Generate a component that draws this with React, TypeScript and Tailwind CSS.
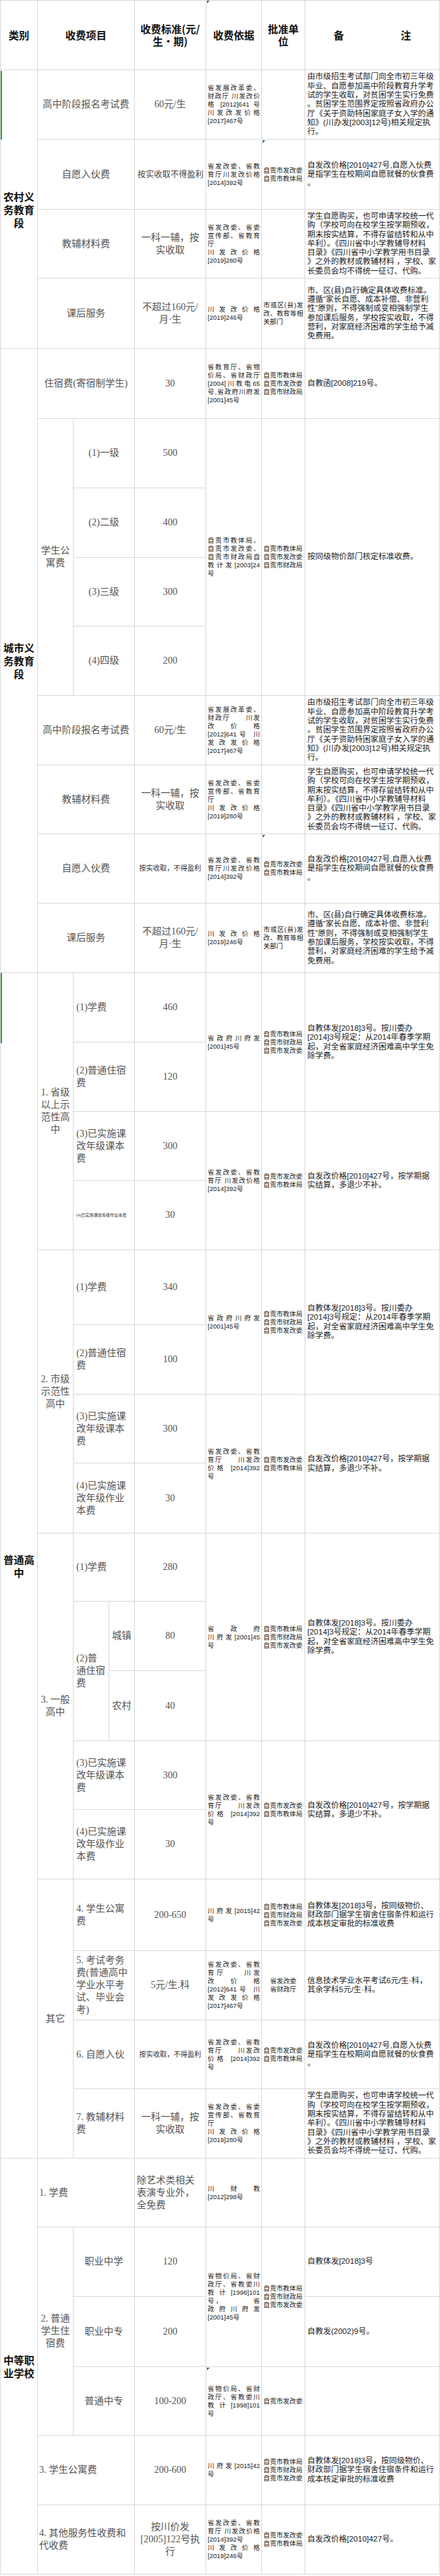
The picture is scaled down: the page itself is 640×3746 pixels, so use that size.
import React from 'react';

const LINE = 'border-r border-b border-[#d9d9d9]';
const SERIF = "font-['Liberation_Serif','Noto_Sans_CJK_SC',serif]";
const SANS = "font-['Liberation_Sans','Noto_Sans_CJK_SC',sans-serif]";
const HEI = "font-['Noto_Sans_CJK_SC',sans-serif]";

// "=" at the start of a line means the line is spread to the full cell width
const Lines: React.FC<{ lines: string[] }> = ({ lines }) => (
  <div className="w-full">
    {lines.map((l, i) =>
      l.startsWith('=') ? (
        <div key={i} className="text-justify [text-align-last:justify]">
          {l.slice(1)}
        </div>
      ) : (
        <div key={i} className="whitespace-nowrap">
          {l}
        </div>
      )
    )}
  </div>
);

type CellProps = { c: string; lines?: string[]; className?: string };

const Head: React.FC<{ c: string; children: React.ReactNode; className?: string }> = ({
  c,
  children,
  className = 'justify-center text-center',
}) => (
  <div
    className={`${c} ${LINE} flex items-center border-t text-[15px] leading-[18px] font-bold text-[#111] ${HEI} ${className}`}
  >
    {children}
  </div>
);

const Cat: React.FC<CellProps> = ({ c, lines = [] }) => (
  <div
    className={`${c} ${LINE} flex items-center justify-center border-l text-center text-[15px] leading-[19px] font-bold text-[#111] ${HEI}`}
  >
    <Lines lines={lines} />
  </div>
);

const Grp: React.FC<CellProps> = ({ c, lines = [] }) => (
  <div className={`${c} ${LINE} flex items-center justify-center text-center text-[14px] leading-[18px] text-[#555] ${SERIF}`}>
    <Lines lines={lines} />
  </div>
);

const Item: React.FC<CellProps & { left?: boolean; size?: string }> = ({
  c,
  lines = [],
  left = false,
  size = 'text-[14px] leading-[18px] text-[#555]',
  className = 'pl-[4px]',
}) => (
  <div
    className={`${c} ${LINE} flex items-center ${SERIF} ${size} ${
      left ? `justify-start text-left ${className}` : 'justify-center text-center'
    }`}
  >
    <Lines lines={lines} />
  </div>
);

const Std: React.FC<CellProps & { size?: string; left?: boolean }> = ({
  c,
  lines = [],
  size = 'text-[14px] leading-[18px] text-[#555]',
  left = false,
}) => (
  <div
    className={`${c} ${LINE} flex items-center ${SERIF} ${size} ${
      left ? 'justify-start pl-[3px] text-left' : 'justify-center px-[4px] text-center'
    }`}
  >
    <Lines lines={lines} />
  </div>
);

const Yj: React.FC<CellProps> = ({ c, lines = [] }) => (
  <div className={`${c} ${LINE} flex items-center px-[2px] text-[9.5px] leading-[12px] text-[#222] ${SANS}`}>
    <Lines lines={lines} />
  </div>
);

const Pz: React.FC<CellProps & { center?: boolean }> = ({ c, lines = [], center = false }) => (
  <div
    className={`${c} ${LINE} flex items-center px-[2px] text-[9.5px] leading-[12px] text-[#222] ${SANS} ${
      center ? 'text-center' : 'text-left'
    }`}
  >
    <Lines lines={lines} />
  </div>
);

const Note: React.FC<CellProps> = ({ c, lines = [] }) => (
  <div className={`${c} ${LINE} flex items-center pl-[3px] pr-[2px] text-[11.5px] leading-[13.3px] text-[#222] ${SANS}`}>
    <Lines lines={lines} />
  </div>
);

const yjKaoshiA = ['=省发展改革委、', '=财政厅 川发改价', '=格 [2012]641 号', '=川发改发价格', '[2017]467号'];
const yjKaoshiB = ['=省发展改革委、', '=财政厅　　川发', '=改价格', '=[2012]641号 川', '=发改发价格', '[2017]467号'];
const yjKaoshiC = ['=省发改委、省教', '=育厅　　川发', '=改价格', '=[2012]641号 川', '=发改发价格', '[2017]467号'];
const yjHuoA = ['=省发改委、省教', '=育厅川发改价格', '[2014]392号'];
const yjHuoB = ['=省发改委、省教', '=育厅　　川发改', '=价格 [2014]392', '号'];
const yjHuoC = ['=省发改委、省教', '=育厅 川发改价格', '[2014]392号'];
const yjJiaofu = ['=省发改委、省委', '=宣传部、省教育', '厅', '=川发改价格', '[2019]280号'];
const yjKehou = ['=川发改价格', '[2019]246号'];
const yjZhusu = ['=省教育厅、省物', '=价局、省财政厅', '=[2004]川教电65', '=号,省政府川府发', '[2001]45号'];
const yjGongyu = ['=自贡市教体局、', '=自贡市发改委、', '=自贡市财政局自', '=教计发[2003]24', '号'];
const yjXuefei = ['=省政府川府发', '[2001]45号'];
const yjXuefeiB = ['=省政府', '=川府发[2001]45', '号'];
const yjGy = ['=川府发[2015]42', '号'];
const yjZhongzhi = ['=川财教', '[2012]298号'];
const yjWujia2 = ['=省物价局、省财', '=政厅、省教委川', '=教计[1998]101', '=号，　　　　省', '=政府川府发', '[2001]45号'];
const yjWujia1 = ['=省物价局、省财', '=政厅、省教委川', '=教计[1998]101', '号'];
const yjQita = ['=省发改委、省教', '=育厅 川发改价格', '[2014]392号', '=川发改价格', '[2019]246号'];

const pzSanA = ['自贡市教体局', '自贡市发改委', '自贡市财政局'];
const pzSanB = ['自贡市教体局', '自贡市财政局', '自贡市发改委'];
const pzEr = ['自贡市发改委', '自贡市教体局'];
const pzKehou = ['=市或区(县)发', '=改、教育等相', '关部门'];

const nKaoshi = [
  '由市级招生考试部门向全市初三年级',
  '毕业、自愿参加高中阶段教育升学考',
  '试的学生收取，对贫困学生实行免费',
  '。贫困学生范围界定按照省政府办公',
  '厅《关于资助特困家庭子女入学的通',
  '知》(川办发[2003]12号)相关规定执',
  '行。',
];
const nHuoshi = ['自发改价格[2010]427号,自愿入伙费', '是指学生在校期间自愿就餐的伙食费', '。'];
const nJiaofu = [
  '学生自愿购买，也可申请学校统一代',
  '购（学校可向在校学生按学期预收，',
  '期末按实结算，不得存留结转和从中',
  '牟利）。《四川省中小学教辅导材料',
  '目录》《四川省中小学教学用书目录',
  '》之外的教材或教辅材料 ，学校、家',
  '长委员会均不得统一征订、代购。',
];
const nKehou = [
  '市、区(县)自行确定具体收费标准。',
  '遵循“家长自愿、成本补偿、非营利',
  '性”原则，不得强制或变相强制学生',
  '参加课后服务，学校按实收取，不得',
  '营利，对家庭经济困难的学生给予减',
  '免费用。',
];
const nXuefei = ['自教体发[2018]3号。按川委办', '[2014]3号规定：从2014年春季学期', '起，对全省家庭经济困难高中学生免', '除学费。'];
const nKeben = ['自发改价格[2010]427号，按学期据', '实结算，多退少不补。'];
const nGongyu = ['自教体发[2018]3号，按同级物价、', '财政部门据学生宿舍住宿条件和运行', '成本核定审批的标准收费'];

const small = 'text-[10px] leading-[12px] text-[#333]';

export default function App() {
  return (
    <div className="relative w-[640px] bg-white">
      <div className="grid grid-cols-[55px_52px_52px_37px_104px_81px_63px_196px] grid-rows-[102px_101px_102px_100px_102px_102px_101px_101px_100px_101px_101px_100px_101px_101px_101px_101px_100px_101px_109px_101px_100px_102px_99px_101px_102px_100px_101px_104px_101px_100px_101px_100px_101px_102px_100px_101px_101px]">
        {/* header */}
        <Head c="col-start-1 row-start-1 border-l">类别</Head>
        <Head c="col-start-2 col-span-3 row-start-1">收费项目</Head>
        <Head c="col-start-5 row-start-1">
          <div>
            收费标准(元/
            <br />
            生·期)
          </div>
        </Head>
        <Head c="col-start-6 row-start-1">收费依据</Head>
        <Head c="col-start-7 row-start-1">
          <div>
            批准单
            <br />
            位
          </div>
        </Head>
        <Head c="col-start-8 row-start-1" className="justify-around">
          <span>备</span>
          <span>注</span>
        </Head>

        {/* 农村义务教育段 */}
        <Cat c="col-start-1 row-start-2 row-span-4" lines={['农村义', '务教育', '段']} />
        <Item c="col-start-2 col-span-3 row-start-2" lines={['高中阶段报名考试费']} />
        <Std c="col-start-5 row-start-2" lines={['60元/生']} />
        <Yj c="col-start-6 row-start-2" lines={yjKaoshiA} />
        <Pz c="col-start-7 row-start-2" />
        <Note c="col-start-8 row-start-2" lines={nKaoshi} />

        <Item c="col-start-2 col-span-3 row-start-3" lines={['自愿入伙费']} />
        <Std c="col-start-5 row-start-3" lines={['按实收取不得盈利']} size="text-[12px] leading-[16px] text-[#444]" />
        <Yj c="col-start-6 row-start-3" lines={yjHuoA} />
        <Pz c="col-start-7 row-start-3" lines={pzEr} />
        <Note c="col-start-8 row-start-3" lines={nHuoshi} />

        <Item c="col-start-2 col-span-3 row-start-4" lines={['教辅材料费']} />
        <Std c="col-start-5 row-start-4" lines={['一科一辅，按', '实收取']} />
        <Yj c="col-start-6 row-start-4" lines={yjJiaofu} />
        <Pz c="col-start-7 row-start-4" />
        <Note c="col-start-8 row-start-4" lines={nJiaofu} />

        <Item c="col-start-2 col-span-3 row-start-5" lines={['课后服务']} />
        <Std c="col-start-5 row-start-5" lines={['不超过160元/', '月·生']} />
        <Yj c="col-start-6 row-start-5" lines={yjKehou} />
        <Pz c="col-start-7 row-start-5" lines={pzKehou} />
        <Note c="col-start-8 row-start-5" lines={nKehou} />

        {/* 城市义务教育段 */}
        <Cat c="col-start-1 row-start-6 row-span-9" lines={['城市义', '务教育', '段']} />
        <Item c="col-start-2 col-span-3 row-start-6" lines={['住宿费(寄宿制学生)']} />
        <Std c="col-start-5 row-start-6" lines={['30']} />
        <Yj c="col-start-6 row-start-6" lines={yjZhusu} />
        <Pz c="col-start-7 row-start-6" lines={pzSanA} />
        <Note c="col-start-8 row-start-6" lines={['自教函[2008]219号。']} />

        <Grp c="col-start-2 row-start-7 row-span-4" lines={['学生公', '寓费']} />
        <Item c="col-start-3 col-span-2 row-start-7" lines={['(1)一级']} />
        <Std c="col-start-5 row-start-7" lines={['500']} />
        <Item c="col-start-3 col-span-2 row-start-8" lines={['(2)二级']} />
        <Std c="col-start-5 row-start-8" lines={['400']} />
        <Item c="col-start-3 col-span-2 row-start-9" lines={['(3)三级']} />
        <Std c="col-start-5 row-start-9" lines={['300']} />
        <Item c="col-start-3 col-span-2 row-start-10" lines={['(4)四级']} />
        <Std c="col-start-5 row-start-10" lines={['200']} />
        <Yj c="col-start-6 row-start-7 row-span-4" lines={yjGongyu} />
        <Pz c="col-start-7 row-start-7 row-span-4" lines={pzSanA} />
        <Note c="col-start-8 row-start-7 row-span-4" lines={['按同级物价部门核定标准收费。']} />

        <Item c="col-start-2 col-span-3 row-start-11" lines={['高中阶段报名考试费']} />
        <Std c="col-start-5 row-start-11" lines={['60元/生']} />
        <Yj c="col-start-6 row-start-11" lines={yjKaoshiB} />
        <Pz c="col-start-7 row-start-11" />
        <Note c="col-start-8 row-start-11" lines={nKaoshi} />

        <Item c="col-start-2 col-span-3 row-start-12" lines={['教辅材料费']} />
        <Std c="col-start-5 row-start-12" lines={['一科一辅，按', '实收取']} />
        <Yj c="col-start-6 row-start-12" lines={yjJiaofu} />
        <Pz c="col-start-7 row-start-12" />
        <Note c="col-start-8 row-start-12" lines={nJiaofu} />

        <Item c="col-start-2 col-span-3 row-start-13" lines={['自愿入伙费']} />
        <Std c="col-start-5 row-start-13" lines={['按实收取，不得盈利']} size={small} />
        <Yj c="col-start-6 row-start-13" lines={yjHuoA} />
        <Pz c="col-start-7 row-start-13" lines={pzEr} />
        <Note c="col-start-8 row-start-13" lines={nHuoshi} />

        <Item c="col-start-2 col-span-3 row-start-14" lines={['课后服务']} />
        <Std c="col-start-5 row-start-14" lines={['不超过160元/', '月·生']} />
        <Yj c="col-start-6 row-start-14" lines={yjKehou} />
        <Pz c="col-start-7 row-start-14" lines={pzKehou} />
        <Note c="col-start-8 row-start-14" lines={nKehou} />

        {/* 普通高中 */}
        <Cat c="col-start-1 row-start-15 row-span-17" lines={['普通高', '中']} />

        <Grp c="col-start-2 row-start-15 row-span-4" lines={['1. 省级', '以上示', '范性高', '中']} />
        <Item left c="col-start-3 col-span-2 row-start-15" lines={['(1)学费']} />
        <Std c="col-start-5 row-start-15" lines={['460']} />
        <Item left c="col-start-3 col-span-2 row-start-16" lines={['(2)普通住宿', '费']} />
        <Std c="col-start-5 row-start-16" lines={['120']} />
        <Item left c="col-start-3 col-span-2 row-start-17" lines={['(3)已实施课', '改年级课本', '费']} />
        <Std c="col-start-5 row-start-17" lines={['300']} />
        <Item
          left
          c="col-start-3 col-span-2 row-start-18"
          lines={['(4)已实施课改年级作业本费']}
          size="text-[6px] leading-[8px] text-[#333]"
        />
        <Std c="col-start-5 row-start-18" lines={['30']} />
        <Yj c="col-start-6 row-start-15 row-span-2" lines={yjXuefei} />
        <Pz c="col-start-7 row-start-15 row-span-2" lines={pzSanB} />
        <Note c="col-start-8 row-start-15 row-span-2" lines={nXuefei} />
        <Yj c="col-start-6 row-start-17 row-span-2" lines={yjHuoC} />
        <Pz c="col-start-7 row-start-17 row-span-2" lines={pzEr} />
        <Note c="col-start-8 row-start-17 row-span-2" lines={nKeben} />

        <Grp c="col-start-2 row-start-19 row-span-4" lines={['2. 市级', '示范性', '高中']} />
        <Item left c="col-start-3 col-span-2 row-start-19" lines={['(1)学费']} />
        <Std c="col-start-5 row-start-19" lines={['340']} />
        <Item left c="col-start-3 col-span-2 row-start-20" lines={['(2)普通住宿', '费']} />
        <Std c="col-start-5 row-start-20" lines={['100']} />
        <Item left c="col-start-3 col-span-2 row-start-21" lines={['(3)已实施课', '改年级课本', '费']} />
        <Std c="col-start-5 row-start-21" lines={['300']} />
        <Item left c="col-start-3 col-span-2 row-start-22" lines={['(4)已实施课', '改年级作业', '本费']} />
        <Std c="col-start-5 row-start-22" lines={['30']} />
        <Yj c="col-start-6 row-start-19 row-span-2" lines={yjXuefei} />
        <Pz c="col-start-7 row-start-19 row-span-2" lines={pzSanB} />
        <Note c="col-start-8 row-start-19 row-span-2" lines={nXuefei} />
        <Yj c="col-start-6 row-start-21 row-span-2" lines={yjHuoB} />
        <Pz c="col-start-7 row-start-21 row-span-2" lines={pzEr} />
        <Note c="col-start-8 row-start-21 row-span-2" lines={nKeben} />

        <Grp c="col-start-2 row-start-23 row-span-5" lines={['3. 一般', '高中']} />
        <Item left c="col-start-3 col-span-2 row-start-23" lines={['(1)学费']} />
        <Std c="col-start-5 row-start-23" lines={['280']} />
        <Item left c="col-start-3 row-start-24 row-span-2" lines={['(2)普', '通住宿', '费']} />
        <Item c="col-start-4 row-start-24" lines={['城镇']} />
        <Std c="col-start-5 row-start-24" lines={['80']} />
        <Item c="col-start-4 row-start-25" lines={['农村']} />
        <Std c="col-start-5 row-start-25" lines={['40']} />
        <Item left c="col-start-3 col-span-2 row-start-26" lines={['(3)已实施课', '改年级课本', '费']} />
        <Std c="col-start-5 row-start-26" lines={['300']} />
        <Item left c="col-start-3 col-span-2 row-start-27" lines={['(4)已实施课', '改年级作业', '本费']} />
        <Std c="col-start-5 row-start-27" lines={['30']} />
        <Yj c="col-start-6 row-start-23 row-span-3" lines={yjXuefeiB} />
        <Pz c="col-start-7 row-start-23 row-span-3" lines={pzSanB} />
        <Note c="col-start-8 row-start-23 row-span-3" lines={nXuefei} />
        <Yj c="col-start-6 row-start-26 row-span-2" lines={yjHuoB} />
        <Pz c="col-start-7 row-start-26 row-span-2" lines={pzEr} />
        <Note c="col-start-8 row-start-26 row-span-2" lines={nKeben} />

        <Grp c="col-start-2 row-start-28 row-span-4" lines={['其它']} />
        <Item left c="col-start-3 col-span-2 row-start-28" lines={['4. 学生公寓', '费']} />
        <Std c="col-start-5 row-start-28" lines={['200-650']} />
        <Yj c="col-start-6 row-start-28" lines={yjGy} />
        <Pz c="col-start-7 row-start-28" lines={pzSanB} />
        <Note c="col-start-8 row-start-28" lines={nGongyu} />

        <Item
          left
          c="col-start-3 col-span-2 row-start-29"
          lines={['5. 考试考务', '费(普通高中', '学业水平考', '试、毕业会', '考)']}
        />
        <Std c="col-start-5 row-start-29" lines={['5元/生.科']} />
        <Yj c="col-start-6 row-start-29" lines={yjKaoshiC} />
        <Pz center c="col-start-7 row-start-29" lines={['省发改委', '省财政厅']} />
        <Note c="col-start-8 row-start-29" lines={['信息技术学业水平考试6元/生·科，', '其余学科5元/生·科。']} />

        <Item left c="col-start-3 col-span-2 row-start-30" lines={['6. 自愿入伙']} />
        <Std c="col-start-5 row-start-30" lines={['按实收取，不得盈利']} size={small} />
        <Yj c="col-start-6 row-start-30" lines={yjHuoB} />
        <Pz c="col-start-7 row-start-30" lines={pzEr} />
        <Note c="col-start-8 row-start-30" lines={nHuoshi} />

        <Item left c="col-start-3 col-span-2 row-start-31" lines={['7. 教辅材料', '费']} />
        <Std c="col-start-5 row-start-31" lines={['一科一辅，按', '实收取']} />
        <Yj c="col-start-6 row-start-31" lines={yjJiaofu} />
        <Pz c="col-start-7 row-start-31" />
        <Note c="col-start-8 row-start-31" lines={nJiaofu} />

        {/* 中等职业学校 */}
        <Cat c="col-start-1 row-start-32 row-span-6" lines={['中等职', '业学校']} />
        <Item left className="pl-[2px]" c="col-start-2 col-span-3 row-start-32" lines={['1. 学费']} />
        <Std left c="col-start-5 row-start-32" lines={['除艺术类相关', '表演专业外，', '全免费']} />
        <Yj c="col-start-6 row-start-32" lines={yjZhongzhi} />
        <Pz c="col-start-7 row-start-32" />
        <Note c="col-start-8 row-start-32" />

        <Grp c="col-start-2 row-start-33 row-span-3" lines={['2. 普通', '学生住', '宿费']} />
        <Item c="col-start-3 col-span-2 row-start-33" lines={['职业中学']} />
        <Std c="col-start-5 row-start-33" lines={['120']} />
        <Item c="col-start-3 col-span-2 row-start-34" lines={['职业中专']} />
        <Std c="col-start-5 row-start-34" lines={['200']} />
        <Item c="col-start-3 col-span-2 row-start-35" lines={['普通中专']} />
        <Std c="col-start-5 row-start-35" lines={['100-200']} />
        <Yj c="col-start-6 row-start-33 row-span-2" lines={yjWujia2} />
        <Pz c="col-start-7 row-start-33 row-span-2" lines={pzSanB} />
        <Note c="col-start-8 row-start-33" lines={['自教体发[2018]3号']} />
        <Note c="col-start-8 row-start-34" lines={['自教发(2002)9号。']} />
        <Yj c="col-start-6 row-start-35" lines={yjWujia1} />
        <Pz c="col-start-7 row-start-35" lines={['自贡市发改委']} />
        <Note c="col-start-8 row-start-35" />

        <Item left className="pl-[2px]" c="col-start-2 col-span-3 row-start-36" lines={['3. 学生公寓费']} />
        <Std c="col-start-5 row-start-36" lines={['200-600']} />
        <Yj c="col-start-6 row-start-36" lines={yjGy} />
        <Pz c="col-start-7 row-start-36" lines={pzSanB} />
        <Note c="col-start-8 row-start-36" lines={nGongyu} />

        <Item left className="pl-[2px]" c="col-start-2 col-span-3 row-start-37" lines={['4. 其他服务性收费和', '代收费']} />
        <Std c="col-start-5 row-start-37" lines={['按川价发', '[2005]122号执', '行']} />
        <Yj c="col-start-6 row-start-37" lines={yjQita} />
        <Pz c="col-start-7 row-start-37" lines={pzEr} />
        <Note c="col-start-8 row-start-37" lines={['自发改价格[2010]427号。']} />
      </div>

      {/* spreadsheet selection marks */}
      <div className="absolute left-[1px] top-[103px] h-[100px] w-[2px] bg-[#2aa140]" />
      <div className="absolute left-[1px] top-[1415px] h-[102px] w-[2px] bg-[#2aa140]" />
      <div className="absolute left-[301px] top-[1px] h-0 w-0 border-t-[4px] border-r-[4px] border-t-[#1f7a34] border-r-transparent" />
      <div className="absolute left-[382px] top-[204px] h-0 w-0 border-t-[4px] border-r-[4px] border-t-[#1f7a34] border-r-transparent" />
      <div className="absolute left-[382px] top-[1214px] h-0 w-0 border-t-[4px] border-r-[4px] border-t-[#1f7a34] border-r-transparent" />
      <div className="absolute left-[301px] top-[3443px] h-0 w-0 border-t-[4px] border-r-[4px] border-t-[#1f7a34] border-r-transparent" />
    </div>
  );
}
